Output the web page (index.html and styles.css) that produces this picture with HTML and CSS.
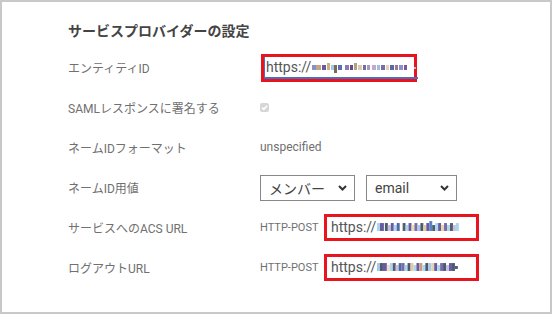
FILE: index.html
```html
<!DOCTYPE html>
<html lang="ja">
<head>
    <meta charset="UTF-8">
    <meta name="viewport" content="width=device-width, initial-scale=1.0">
    <title>サービスプロバイダーの設定</title>
    <link rel="stylesheet" href="styles.css">
</head>
<body>

<div class="panel">
    <h2 class="title">サービスプロバイダーの設定</h2>

    <div class="rows">
        <div class="label">エンティティID</div>
        <div class="value">
            <div class="mark mark-entity">
                <div class="field">
                    <span class="url">https://</span>
                    <svg class="blur" width="106" height="12" viewBox="0 0 106 12">
                        <rect x="0" y="4" width="4" height="5" fill="#8a8fc8"/>
                        <rect x="4" y="4" width="5" height="5" fill="#c6a48a"/>
                        <rect x="10" y="4" width="4" height="5" fill="#6a5aa0"/>
                        <rect x="15" y="2" width="3" height="7" fill="#d0b080"/>
                        <rect x="19" y="4" width="3" height="5" fill="#a0c8e8"/>
                        <rect x="22" y="4" width="3" height="8" fill="#7a6a58"/>
                        <rect x="26" y="4" width="4" height="5" fill="#5a70b0"/>
                        <rect x="33" y="4" width="4" height="5" fill="#8a7ab8"/>
                        <rect x="38" y="4" width="3" height="5" fill="#6a4a7a"/>
                        <rect x="42" y="2" width="3" height="7" fill="#b0a090"/>
                        <rect x="46" y="4" width="4" height="5" fill="#e0c8a8"/>
                        <rect x="51" y="4" width="3" height="5" fill="#6870a8"/>
                        <rect x="55" y="4" width="3" height="5" fill="#a898c8"/>
                        <rect x="60" y="4" width="4" height="5" fill="#c8a8c8"/>
                        <rect x="65" y="4" width="3" height="5" fill="#98c0e0"/>
                        <rect x="69" y="4" width="4" height="5" fill="#7a6ab0"/>
                        <rect x="74" y="4" width="3" height="5" fill="#e8d0b0"/>
                        <rect x="78" y="4" width="4" height="5" fill="#5a68a8"/>
                        <rect x="83" y="4" width="3" height="5" fill="#a07898"/>
                        <rect x="87" y="4" width="4" height="5" fill="#8a90d0"/>
                        <rect x="92" y="4" width="3" height="5" fill="#7a58a0"/>
                        <rect x="102" y="6" width="2" height="2" fill="#b8b8c8"/>
                    </svg>
                </div>
            </div>
        </div>

        <div class="label">SAMLレスポンスに署名する</div>
        <div class="value">
            <span class="check">
                <svg width="9" height="9" viewBox="0 0 9 9"><path d="M2 4.6 L3.8 6.4 L7 2.8" stroke="#fff" stroke-width="1.6" fill="none"/></svg>
            </span>
        </div>

        <div class="label">ネームIDフォーマット</div>
        <div class="value plain">unspecified</div>

        <div class="label">ネームID用値</div>
        <div class="value selects">
            <div class="select select-role">
                <span>メンバー</span>
                <svg width="9" height="6" viewBox="0 0 9 6"><path d="M1 1 L4.5 4.5 L8 1" stroke="#333" stroke-width="2" fill="none"/></svg>
            </div>
            <div class="select select-attr">
                <span>email</span>
                <svg width="9" height="6" viewBox="0 0 9 6"><path d="M1 1 L4.5 4.5 L8 1" stroke="#333" stroke-width="2" fill="none"/></svg>
            </div>
        </div>

        <div class="label">サービスへのACS URL</div>
        <div class="value">
            <span class="binding">HTTP-POST</span>
            <div class="mark mark-url">
                <span class="url">https://</span>
                <svg class="blur" width="100" height="12" viewBox="0 0 100 12">
                    <rect x="0" y="2" width="3" height="8" fill="#a8d8f0"/>
                    <rect x="3" y="2" width="4" height="8" fill="#6a5aa0"/>
                    <rect x="8" y="2" width="3" height="8" fill="#4a5a70"/>
                    <rect x="11" y="4" width="3" height="6" fill="#c8c0e0"/>
                    <rect x="14" y="2" width="3" height="8" fill="#6a5aa0"/>
                    <rect x="17" y="4" width="3" height="6" fill="#a8d8f0"/>
                    <rect x="20" y="2" width="3" height="8" fill="#4a6aa8"/>
                    <rect x="26" y="2" width="3" height="8" fill="#5a5a70"/>
                    <rect x="29" y="4" width="3" height="6" fill="#a8d8f0"/>
                    <rect x="32" y="2" width="3" height="8" fill="#6a5aa0"/>
                    <rect x="35" y="4" width="3" height="6" fill="#f0d8b0"/>
                    <rect x="38" y="2" width="3" height="8" fill="#7a6aa8"/>
                    <rect x="41" y="4" width="3" height="6" fill="#a8c8e8"/>
                    <rect x="44" y="2" width="3" height="8" fill="#4a5a70"/>
                    <rect x="47" y="4" width="3" height="6" fill="#e8c8a0"/>
                    <rect x="50" y="2" width="3" height="8" fill="#6a5aa0"/>
                    <rect x="53" y="0" width="3" height="10" fill="#5a80c8"/>
                    <rect x="56" y="4" width="3" height="6" fill="#4a5a70"/>
                    <rect x="59" y="2" width="3" height="8" fill="#a8d8f0"/>
                    <rect x="62" y="2" width="3" height="8" fill="#6a5aa0"/>
                    <rect x="65" y="4" width="3" height="6" fill="#f0d0a8"/>
                    <rect x="68" y="2" width="3" height="8" fill="#7a6aa8"/>
                    <rect x="71" y="4" width="3" height="6" fill="#a8d8f0"/>
                    <rect x="74" y="2" width="3" height="8" fill="#5a5a70"/>
                    <rect x="77" y="4" width="3" height="6" fill="#c8c0e0"/>
                    <rect x="80" y="2" width="3" height="8" fill="#a8d8f0"/>
                </svg>
            </div>
        </div>

        <div class="label">ログアウトURL</div>
        <div class="value">
            <span class="binding">HTTP-POST</span>
            <div class="mark mark-url">
                <span class="url">https://</span>
                <svg class="blur" width="100" height="12" viewBox="0 0 100 12">
                    <rect x="0" y="2" width="3" height="8" fill="#a8c8e8"/>
                    <rect x="3" y="2" width="3" height="8" fill="#4a5a70"/>
                    <rect x="6" y="2" width="4" height="8" fill="#6a5aa0"/>
                    <rect x="10" y="4" width="3" height="6" fill="#f0e0c0"/>
                    <rect x="13" y="2" width="3" height="8" fill="#a8d8f0"/>
                    <rect x="16" y="2" width="3" height="8" fill="#5a5a70"/>
                    <rect x="19" y="4" width="3" height="6" fill="#c8c0e0"/>
                    <rect x="22" y="2" width="3" height="8" fill="#4a6aa8"/>
                    <rect x="25" y="2" width="3" height="8" fill="#7a6aa8"/>
                    <rect x="28" y="4" width="3" height="6" fill="#a8d8f0"/>
                    <rect x="31" y="2" width="3" height="8" fill="#4a5a70"/>
                    <rect x="34" y="2" width="3" height="8" fill="#e8c8a0"/>
                    <rect x="37" y="4" width="3" height="6" fill="#a8d8f0"/>
                    <rect x="40" y="2" width="3" height="8" fill="#6a5aa0"/>
                    <rect x="43" y="2" width="3" height="8" fill="#c8a080"/>
                    <rect x="46" y="4" width="3" height="6" fill="#a8d8f0"/>
                    <rect x="49" y="2" width="3" height="8" fill="#4a5a70"/>
                    <rect x="52" y="2" width="3" height="8" fill="#a8c8e8"/>
                    <rect x="55" y="2" width="3" height="8" fill="#e8d0b0"/>
                    <rect x="58" y="2" width="3" height="8" fill="#6a5aa0"/>
                    <rect x="61" y="4" width="3" height="6" fill="#a8d8f0"/>
                    <rect x="64" y="2" width="3" height="8" fill="#7a6aa8"/>
                    <rect x="67" y="2" width="3" height="8" fill="#4a5a70"/>
                    <rect x="70" y="4" width="3" height="6" fill="#c8c0e0"/>
                    <rect x="73" y="2" width="3" height="8" fill="#6a5aa0"/>
                    <rect x="76" y="2" width="3" height="8" fill="#4a5a70"/>
                    <rect x="79" y="5" width="3" height="3" fill="#5a5a70"/>
                </svg>
            </div>
        </div>
    </div>
</div>

</body>
</html>
```

FILE: styles.css
```css
body {
    margin: 0;
    background-color: #fff;
    font-family: Roboto, "Noto Sans CJK JP", sans-serif;
    color: #555;
}

.panel {
    width: 552px;
    height: 314px;
    box-sizing: border-box;
    border: 2px solid #c8c8c8;
    padding: 19px 0 0 66px;
}

.title {
    margin: 0 0 6px 0;
    height: 20px;
    line-height: 20px;
    font-size: 14px;
    font-weight: 700;
    color: #444;
}

.rows {
    display: grid;
    grid-template-columns: 192px auto;
    grid-auto-rows: 40px;
    align-items: center;
}

.label {
    font-size: 12px;
    color: #707070;
}

.value {
    display: flex;
    align-items: center;
}

.plain {
    font-size: 12px;
    color: #707070;
}

/* red annotation boxes */
.mark {
    border: 3px solid #e8141e;
    box-sizing: border-box;
    display: flex;
    align-items: center;
}

.mark-entity {
    width: 156px;
    height: 28px;
    margin: 2px 0 0 1px;
}

.mark-entity .field {
    flex: 1;
    height: 100%;
    box-sizing: border-box;
    border-left: 1px solid #4a6fc0;
    border-bottom: 2px solid #4a6fc0;
    display: flex;
    align-items: center;
    padding-left: 1px;
}

.mark-url {
    width: 155px;
    height: 27px;
    padding-left: 4px;
}

.url {
    font-size: 14px;
    color: #555;
}

.blur {
    display: block;
    margin-left: 1px;
}

.binding {
    font-size: 11px;
    color: #707070;
    width: 64px;
}

.check {
    width: 9px;
    height: 9px;
    border-radius: 2px;
    background-color: #d6d6d6;
    display: flex;
    align-items: center;
    justify-content: center;
}

.selects {
    gap: 11px;
    padding-top: 2px;
}

.select {
    height: 26px;
    box-sizing: border-box;
    border: 1px solid #888;
    display: flex;
    align-items: center;
    justify-content: space-between;
    padding: 0 7px 0 8px;
    font-size: 14px;
    color: #444;
}

.select-role {
    width: 95px;
}

.select-attr {
    width: 91px;
}
```
